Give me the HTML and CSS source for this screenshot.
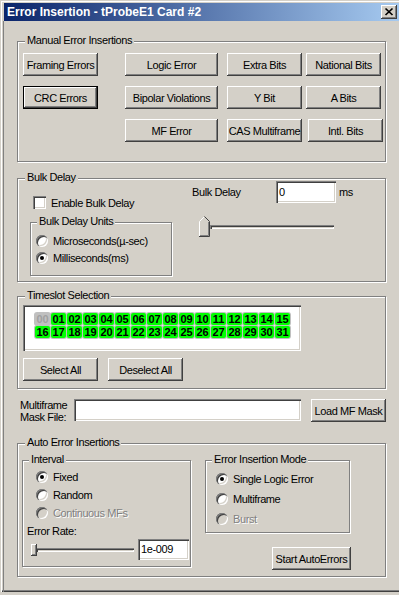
FILE: index.html
```html
<!DOCTYPE html>
<html>
<head>
<meta charset="utf-8">
<title>Error Insertion</title>
<link rel="stylesheet" href="styles.css">
</head>
<body>
<div class="window">
  <div class="titlebar">
    <span class="title">Error Insertion - tProbeE1 Card #2</span>
    <span class="close">
      <svg width="16" height="14" viewBox="0 0 16 14"><path d="M4.5 3.5l7 6.5M11.5 3.5l-7 6.5" stroke="#000" stroke-width="1.7" fill="none"/></svg>
    </span>
  </div>
  <div class="client">
    <section class="group g-manual">
      <span class="legend">Manual Error Insertions</span>
      <div class="btn-grid">
        <button class="btn">Framing Errors</button>
        <button class="btn wide">Logic Error</button>
        <button class="btn">Extra Bits</button>
        <button class="btn">National Bits</button>
        <button class="btn default">CRC Errors</button>
        <button class="btn wide">Bipolar Violations</button>
        <button class="btn">Y Bit</button>
        <button class="btn">A Bits</button>
        <span></span>
        <button class="btn wide">MF Error</button>
        <button class="btn">CAS Multiframe</button>
        <button class="btn shift">Intl. Bits</button>
      </div>
    </section>

    <section class="group g-bulk">
      <span class="legend">Bulk Delay</span>
      <div class="bulk-left">
        <label class="check-row"><span class="checkbox"></span><span>Enable Bulk Delay</span></label>
        <div class="subgroup units">
          <span class="legend sub">Bulk Delay Units</span>
          <div class="radio-list gap5">
            <div class="radio-row"><span class="radio"></span><span>Microseconds(µ-sec)</span></div>
            <div class="radio-row"><span class="radio checked"></span><span>Milliseconds(ms)</span></div>
          </div>
        </div>
      </div>
      <div class="bulk-right">
        <div class="delay-row">
          <span class="delay-label">Bulk Delay</span>
          <span class="edit delay-edit">0</span>
          <span class="ms">ms</span>
        </div>
        <div class="slider">
          <svg class="thumb" width="11" height="21" viewBox="0 0 11 21">
            <polygon points="5,0 10,5 10,20 0,20 0,5" fill="#d4d0c8"/>
            <path d="M0.5 20V5.5L5 1" stroke="#fff" fill="none"/>
            <path d="M5.5 0.5L10.5 5.5V20.5H0" stroke="#404040" fill="none"/>
            <path d="M9.5 6V19.5H1" stroke="#808080" fill="none"/>
          </svg>
          <div class="track bulk-track"></div>
        </div>
      </div>
    </section>

    <section class="group g-ts">
      <span class="legend">Timeslot Selection</span>
      <div class="ts-box">
        <div class="ts-grid">
          <span class="ts off">00</span><span class="ts">01</span><span class="ts">02</span><span class="ts">03</span><span class="ts">04</span><span class="ts">05</span><span class="ts">06</span><span class="ts">07</span><span class="ts">08</span><span class="ts">09</span><span class="ts">10</span><span class="ts">11</span><span class="ts">12</span><span class="ts">13</span><span class="ts">14</span><span class="ts">15</span>
          <span class="ts">16</span><span class="ts">17</span><span class="ts">18</span><span class="ts">19</span><span class="ts">20</span><span class="ts">21</span><span class="ts">22</span><span class="ts">23</span><span class="ts">24</span><span class="ts">25</span><span class="ts">26</span><span class="ts">27</span><span class="ts">28</span><span class="ts">29</span><span class="ts">30</span><span class="ts">31</span>
        </div>
      </div>
      <div class="ts-buttons">
        <button class="btn">Select All</button>
        <button class="btn">Deselect All</button>
      </div>
    </section>

    <div class="mask-row">
      <span class="mask-label">Multiframe<br>Mask File:</span>
      <span class="edit mask-edit"></span>
      <button class="btn load">Load MF Mask</button>
    </div>

    <section class="group g-auto">
      <span class="legend">Auto Error Insertions</span>
      <div class="subgroup interval">
        <span class="legend sub">Interval</span>
        <div class="radio-list gap6 interval-radios">
          <div class="radio-row"><span class="radio checked"></span><span>Fixed</span></div>
          <div class="radio-row"><span class="radio"></span><span>Random</span></div>
          <div class="radio-row disabled"><span class="radio"></span><span>Continuous MFs</span></div>
        </div>
        <div class="rate-label">Error Rate:</div>
        <div class="rate-row">
          <div class="er-slider">
            <span class="er-thumb"></span>
            <div class="track er-track"></div>
          </div>
          <span class="edit rate-edit">1e-009</span>
        </div>
      </div>
      <div class="auto-right">
        <div class="subgroup mode">
          <span class="legend sub">Error Insertion Mode</span>
          <div class="radio-list gap8">
            <div class="radio-row"><span class="radio checked"></span><span>Single Logic Error</span></div>
            <div class="radio-row"><span class="radio"></span><span>Multiframe</span></div>
            <div class="radio-row disabled"><span class="radio"></span><span>Burst</span></div>
          </div>
        </div>
        <button class="btn start">Start AutoErrors</button>
      </div>
    </section>
  </div>
</div>
</body>
</html>
```

FILE: styles.css
```css
* { box-sizing: border-box; }
html, body { margin: 0; padding: 0; }
body {
  width: 399px;
  height: 595px;
  overflow: hidden;
  background: #d4d0c8;
  font-family: "Liberation Sans", Arial, sans-serif;
  font-size: 11px;
  letter-spacing: -0.4px;
  color: #000;
}

.window {
  width: 404px;
  height: 592px;
  background: #d4d0c8;
  padding: 3px 0 0 4px;
  box-shadow: inset 1px 1px 0 #d4d0c8, inset 2px 2px 0 #fff, inset 0 -1px 0 #404040, inset 0 -2px 0 #808080;
  display: flex;
  flex-direction: column;
}

.titlebar {
  width: 395px;
  height: 18px;
  flex: none;
  display: flex;
  align-items: center;
  justify-content: space-between;
  padding: 0 2px 0 3px;
  background: linear-gradient(to right, #0a246a, #a6caf0);
}
.title {
  color: #fff;
  font-weight: bold;
  font-size: 12px;
  letter-spacing: 0;
  white-space: nowrap;
}
.close {
  width: 16px;
  height: 14px;
  display: block;
  background: #d4d0c8;
  box-shadow: inset -1px -1px #404040, inset 1px 1px #fff, inset -2px -2px #808080;
}
.close svg { display: block; }

.client {
  flex: 1;
  margin-left: -1px;
  border-left: 1px solid #808080;
  padding: 0 0 0 13px;
}

/* group boxes */
.group, .subgroup {
  position: relative;
  border: 1px solid #808080;
  box-shadow: inset 1px 1px 0 #fff, 1px 1px 0 #fff;
}
.group { width: 369px; }
.legend {
  position: absolute;
  left: 7px;
  top: -8px;
  padding: 0 2px;
  line-height: 13px;
  background: #d4d0c8;
  white-space: nowrap;
}
.legend.sub { left: 6px; }

/* buttons */
.btn {
  display: block;
  width: 75px;
  height: 23px;
  padding: 0;
  border: none;
  background: #d4d0c8;
  font-family: inherit;
  font-size: 11px;
  letter-spacing: -0.4px;
  color: #000;
  white-space: nowrap;
  box-shadow: inset -1px -1px #404040, inset 1px 1px #fff, inset -2px -2px #808080, inset 2px 2px #d4d0c8;
}
.btn.wide { width: 93px; }
.btn.default {
  box-shadow: inset 0 0 0 1px #000, inset -2px -2px #404040, inset 2px 2px #fff, inset -3px -3px #808080;
}
.btn.shift { margin-left: 2px; }

.g-manual {
  margin-top: 20px;
  height: 121px;
  padding: 11px 0 0 5px;
}
.btn-grid {
  display: grid;
  grid-template-columns: 102px 102px 79px 75px;
  grid-auto-rows: 23px;
  row-gap: 10px;
}

/* bulk delay */
.g-bulk {
  margin-top: 16px;
  height: 104px;
  display: flex;
  align-items: flex-start;
}
.bulk-left {
  margin-left: 12px;
  display: flex;
  flex-direction: column;
}
.check-row {
  margin: 17px 0 0 3px;
  display: flex;
  align-items: center;
  gap: 5px;
  height: 13px;
}
.checkbox {
  width: 13px;
  height: 13px;
  background: #fff;
  box-shadow: inset 1px 1px #808080, inset 2px 2px #404040, inset -1px -1px #fff, inset -2px -2px #d4d0c8;
}
.units {
  margin-top: 13px;
  width: 142px;
  height: 54px;
  padding: 12px 0 0 5px;
}
.radio-list { display: flex; flex-direction: column; }
.gap5 { gap: 5px; }
.gap6 { gap: 6px; }
.gap8 { gap: 8px; }
.radio-row {
  display: flex;
  align-items: center;
  gap: 5px;
  height: 12px;
  line-height: 12px;
  white-space: nowrap;
}
.radio {
  position: relative;
  width: 12px;
  height: 12px;
  flex: none;
  border-radius: 50%;
  background: #fff;
  box-shadow: inset 1px 1px #808080, inset 2px 2px #404040, inset -1px -1px #fff, inset -2px -2px #d4d0c8;
}
.radio.checked::after {
  content: "";
  position: absolute;
  left: 4px;
  top: 4px;
  width: 4px;
  height: 4px;
  border-radius: 50%;
  background: #000;
}
.disabled { color: #808080; text-shadow: 1px 1px 0 #fff; }
.disabled .radio { background: #d4d0c8; }

.bulk-right {
  margin-left: 19px;
  display: flex;
  flex-direction: column;
}
.delay-row {
  margin-top: 2px;
  height: 22px;
  display: flex;
  align-items: center;
}
.delay-label { width: 85px; padding-left: 1px; }
.edit {
  display: block;
  background: #fff;
  box-shadow: inset 1px 1px #808080, inset 2px 2px #404040, inset -1px -1px #fff, inset -2px -2px #d4d0c8;
  padding-left: 3px;
  white-space: nowrap;
}
.delay-edit {
  width: 60px;
  height: 22px;
  line-height: 22px;
}
.ms { margin-left: 3px; }

.slider {
  position: relative;
  margin: 13px 0 0 8px;
  height: 21px;
  padding: 9px 0 0 11px;
}
.thumb { position: absolute; left: 0; top: 0; display: block; }
.track {
  height: 4px;
  box-shadow: inset 1px 1px #808080, inset 2px 2px #404040, inset -1px -1px #fff, inset -2px -2px #d4d0c8;
  background: #d4d0c8;
}
.bulk-track { width: 124px; }

/* timeslots */
.g-ts {
  margin-top: 14px;
  height: 93px;
  padding: 8px 0 0 5px;
}
.ts-box {
  width: 278px;
  height: 46px;
  background: #fff;
  padding: 8px 0 0 12px;
  box-shadow: inset 1px 1px #808080, inset 2px 2px #404040, inset -1px -1px #fff, inset -2px -2px #d4d0c8;
}
.ts-grid {
  display: grid;
  grid-template-columns: repeat(16, 15px);
  column-gap: 1px;
  row-gap: 1px;
  grid-auto-rows: 12px;
}
.ts {
  height: 12px;
  background: #00ff00;
  border-radius: 2px;
  box-shadow: 0 0 0 1px #c0c0c0;
  font-weight: bold;
  font-size: 11px;
  letter-spacing: 0;
  line-height: 12px;
  text-align: center;
  color: #000;
  overflow: hidden;
}
.ts.off { background: #c0c0c0; color: #a0a0a0; }
.ts-buttons {
  margin-top: 7px;
  display: flex;
  gap: 10px;
}

/* mask row */
.mask-row {
  margin-top: 10px;
  height: 23px;
  display: flex;
  align-items: center;
}
.mask-label {
  margin-left: 3px;
  width: 54px;
  line-height: 12px;
}
.mask-edit {
  width: 227px;
  height: 22px;
  align-self: flex-start;
}
.btn.load { margin-left: 10px; }

/* auto */
.g-auto {
  margin-top: 21px;
  height: 134px;
  padding: 16px 0 0 4px;
  display: flex;
  align-items: flex-start;
}
.interval {
  width: 169px;
  height: 107px;
  padding: 10px 0 0 4px;
}
.interval-radios { margin-left: 9px; }
.rate-label {
  margin-top: 6px;
  line-height: 13px;
}
.rate-row {
  margin: 1px 0 0 4px;
  height: 21px;
  display: flex;
  align-items: center;
}
.er-slider {
  position: relative;
  width: 103px;
  height: 12px;
  padding: 4px 0 0 5px;
}
.er-thumb {
  position: absolute;
  left: 0;
  top: 0;
  width: 6px;
  height: 12px;
  background: #d4d0c8;
  box-shadow: inset -1px -1px #404040, inset 1px 1px #fff, inset -2px -2px #808080;
  z-index: 1;
}
.er-track { width: 98px; }
.rate-edit {
  margin-left: 4px;
  width: 51px;
  height: 21px;
  line-height: 21px;
}
.auto-right {
  margin-left: 14px;
  display: flex;
  flex-direction: column;
}
.mode {
  width: 145px;
  height: 73px;
  padding: 12px 0 0 10px;
}
.btn.start {
  width: 79px;
  margin: 14px 0 0 67px;
}
```
